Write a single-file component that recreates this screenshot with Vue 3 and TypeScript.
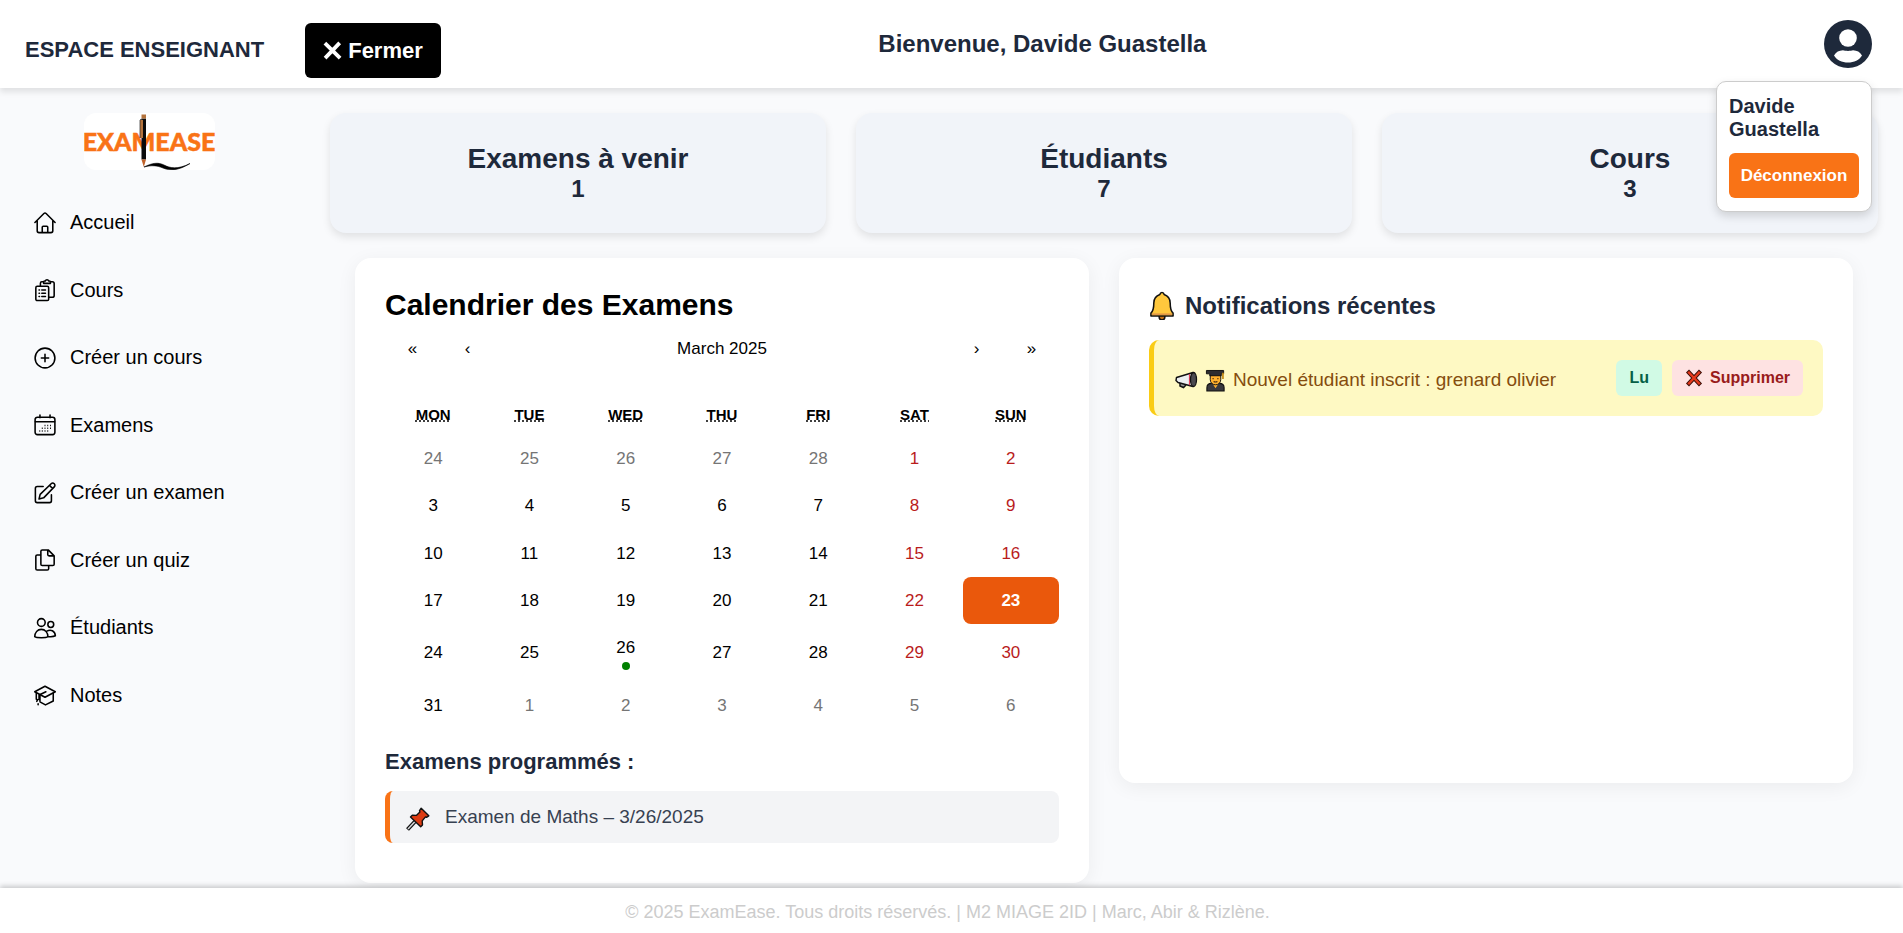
<script setup lang="ts">
interface Stat {
  label: string
  value: number
}

interface Day {
  day: number
  weekend: boolean
  outside: boolean
  today: boolean
  exam: boolean
}

const user = 'Davide Guastella'

const menu: { id: string; label: string }[] = [
  { id: 'home', label: 'Accueil' },
  { id: 'courses', label: 'Cours' },
  { id: 'add-course', label: 'Créer un cours' },
  { id: 'exams', label: 'Examens' },
  { id: 'add-exam', label: 'Créer un examen' },
  { id: 'quiz', label: 'Créer un quiz' },
  { id: 'students', label: 'Étudiants' },
  { id: 'grades', label: 'Notes' },
]

const stats: Stat[] = [
  { label: 'Examens à venir', value: 1 },
  { label: 'Étudiants', value: 7 },
  { label: 'Cours', value: 3 },
]

const weekdays: [string, string][] = [
  ['Mon', 'Monday'],
  ['Tue', 'Tuesday'],
  ['Wed', 'Wednesday'],
  ['Thu', 'Thursday'],
  ['Fri', 'Friday'],
  ['Sat', 'Saturday'],
  ['Sun', 'Sunday'],
]

const days: Day[] = Array.from({ length: 42 }, (_, i) => {
  const date = new Date(2025, 1, 24 + i)
  const outside = date.getMonth() !== 2
  const day = date.getDate()
  return {
    day,
    outside,
    weekend: !outside && i % 7 > 4,
    today: !outside && day === 23,
    exam: !outside && day === 26,
  }
})
</script>

<template>
  <div class="page">
    <header class="topbar">
      <div class="brand">
        <span class="space-name">ESPACE ENSEIGNANT</span>
        <button type="button" class="close">
          <svg width="19" height="19" viewBox="0 0 18 18" aria-hidden="true">
            <path d="M1.800 2 16.200 16.200M15.800 1.800 2 16.200" stroke="#fff" stroke-width="3.600" />
          </svg>
          Fermer
        </button>
      </div>
      <h1 class="welcome">Bienvenue, {{ user }}</h1>
      <div class="account">
        <button type="button" class="avatar" aria-label="Profil">
          <svg width="48" height="48" viewBox="0 0 48 48" aria-hidden="true">
            <circle cx="24" cy="24" r="24" fill="#1e293b" />
            <circle cx="24" cy="18" r="8.800" fill="#fff" />
            <path d="M10 35.500c2-3.500 5-5 9-5.200 2 .8 8 .8 10 0 4 .2 7 1.700 9 5.200-2.500 4.500-8 7-14 7s-11.500-2.500-14-7z" fill="#fff" />
          </svg>
        </button>
        <div class="dropdown">
          <p class="user-name">{{ user }}</p>
          <button type="button" class="logout">Déconnexion</button>
        </div>
      </div>
    </header>

    <div class="body">
      <aside class="sidebar">
        <svg class="logo" width="131" height="57" viewBox="0 0 131 57" role="img" aria-label="ExamEase">
          <text x="65" y="38" text-anchor="middle" class="logo-text">EXAMEASE</text>
          <path d="M57.500 5.500h4.500v41h-4.500z" fill="#0b0b0b" />
          <path d="M57.500 1.500h4.500v4h-4.500zM56 7h3v18h-3z" fill="#b4733c" />
          <path d="M56 6.500h3M56 7v18" stroke="#222" stroke-width=".7" fill="none" />
          <path d="M57.500 46.500h4.500l-2.200 7.500z" fill="#c0622a" />
          <path d="M60 54c8-4 14-5 20-2s13 5 26-1.500c-11 7-20 7.500-27 4.500-6-2.500-11-3-19-1z" fill="#000" stroke="#000" stroke-width=".6" />
        </svg>
        <nav class="menu">
          <a v-for="item in menu" :key="item.id" href="#" class="menu-link">
            <svg class="menu-icon" viewBox="0 0 24 24" aria-hidden="true">
              <g v-if="item.id === 'home'">
                <path d="M1 11.500 10.800 1.700a1.700 1.700 0 0 1 2.400 0L23 11.500M3.500 9.500v11a2 2 0 0 0 2 2h13a2 2 0 0 0 2-2v-11M9 22.500v-6a1 1 0 0 1 1-1h4a1 1 0 0 1 1 1v6" />
              </g>
              <g v-else-if="item.id === 'courses'">
                <rect x="2" y="8" width="14" height="15.500" rx="1.500" />
                <path d="M7 7.500V4.500a1.500 1.500 0 0 1 1.500-1.500H10M18.500 3H20a2 2 0 0 1 2 2v13a2 2 0 0 1-2 2h-3.500" />
                <path d="M10.500 4.800V3.200a1 1 0 0 1 1-1h.8a2 2 0 0 1 3.800 0h.8a1 1 0 0 1 1 1v1.600z" />
                <path d="M5.500 12h.5M8.500 12h4M5.500 15.500h.5M8.500 15.500h4M5.500 19h.5M8.500 19h4" />
              </g>
              <g v-else-if="item.id === 'add-course'">
                <circle cx="12" cy="12" r="10.800" />
                <path d="M12 8v8M8 12h8" />
              </g>
              <g v-else-if="item.id === 'exams'">
                <rect x="1.200" y="3.500" width="21.600" height="19" rx="2.500" />
                <path d="M1.500 8.500h21M6.500 1v3M17.500 1v3" />
                <path d="M11.500 12.500h1M14.500 12.500h1M17.500 12.500h1M8.500 15.500h1M11.500 15.500h1M14.500 15.500h1M17.500 15.500h1M5.800 18.500h1M8.500 18.500h1M11.500 18.500h1M14.500 18.500h1" stroke-linecap="butt" />
              </g>
              <g v-else-if="item.id === 'add-exam'">
                <path d="M10 5H3.500a2 2 0 0 0-2 2v13.500a2 2 0 0 0 2 2H17a2 2 0 0 0 2-2V14" />
                <path d="M5.500 18.500 6.700 13.500 18.700 1.900a2.400 2.400 0 0 1 3.400 3.400L10.500 17.300zM17 3.800l3.200 3.200" />
              </g>
              <g v-else-if="item.id === 'quiz'">
                <path d="M7 6.500H3.500a1.500 1.500 0 0 0-1.500 1.500v13.500A1.500 1.500 0 0 0 3.500 23h11a1.500 1.500 0 0 0 1.500-1.500V18.500" />
                <path d="M9 1h6.500L22 7.500V16.500a1.500 1.500 0 0 1-1.500 1.500H9a1.500 1.500 0 0 1-1.500-1.500v-14A1.500 1.500 0 0 1 9 1zM15 1.500V6a1.500 1.500 0 0 0 1.500 1.500H22" />
              </g>
              <g v-else-if="item.id === 'students'">
                <circle cx="8" cy="6" r="4.200" />
                <circle cx="18.300" cy="8.200" r="3.200" />
                <path d="M.8 21.500c.2-4.500 3-8 7.200-8s7 3.500 7.200 8c-2 1.500-12.400 1.500-14.400 0zM14 15.500c4-2.500 9-.5 9.300 5-1.500.8-4.800 1.200-8 .8" />
              </g>
              <g v-else>
                <path d="M.8 8.500 12 2.500l11.200 6L12 14.500z" />
                <path d="M21 10v8.500l-8.500 4.300L6.500 19.500M13 8.500 5.500 12v5M2.500 10v6.500M4 17l-1 2M6.500 12.500v6M4.500 21.500v1" />
              </g>
            </svg>
            {{ item.label }}
          </a>
        </nav>
      </aside>

      <main class="content">
        <section class="stats">
          <article v-for="stat in stats" :key="stat.label" class="stat">
            <h2>{{ stat.label }}</h2>
            <p>{{ stat.value }}</p>
          </article>
        </section>

        <div class="panels">
          <section class="panel">
            <h2 class="calendar-title">Calendrier des Examens</h2>
            <div class="calendar">
              <div class="calendar-nav">
                <button type="button" aria-label="Année précédente">«</button>
                <button type="button" aria-label="Mois précédent">‹</button>
                <button type="button" class="month">March 2025</button>
                <button type="button" aria-label="Mois suivant">›</button>
                <button type="button" aria-label="Année suivante">»</button>
              </div>
              <div class="weekdays">
                <div v-for="[short, full] in weekdays" :key="short">
                  <abbr :title="full">{{ short }}</abbr>
                </div>
              </div>
              <div class="days">
                <button
                  v-for="(d, i) in days"
                  :key="i"
                  type="button"
                  class="day"
                  :class="{ outside: d.outside, weekend: d.weekend, today: d.today, 'has-exam': d.exam }"
                >
                  {{ d.day }}
                  <span v-if="d.exam" class="dot"></span>
                </button>
              </div>
            </div>
            <h3 class="exams-title">Examens programmés :</h3>
            <ul class="exams">
              <li>
                <svg width="24" height="24" viewBox="0 0 24 24" aria-hidden="true">
                  <path d="M1.500 22.500 9 14.500" stroke="#111" stroke-width="4" />
                  <path d="M2 22 9 14.500" stroke="#d6d9dc" stroke-width="1.500" />
                  <path d="M15.200 1.200 22.800 8.800l-2.300 1.500-1-.4-3.300 4 .3 4-1.800 1.800L4.500 10l1.800-1.800 4 .2 3.600-3.400-.4-1.400z" fill="#dc3b12" stroke="#111" stroke-width="1.400" stroke-linejoin="round" />
                </svg>
                Examen de Maths – 3/26/2025
              </li>
            </ul>
          </section>

          <section class="panel notifications">
            <h2 class="notifications-title">
              <svg width="26" height="29" viewBox="0 0 27 30" aria-hidden="true">
                <path d="M10.500 25h6v2a3 3 0 0 1-6 0z" fill="#c77416" stroke="#111" stroke-width="1.500" />
                <path d="M13.500 1.500c1.300 0 2 .8 2.200 2 4 1.300 6.300 4.500 6.300 9 0 5 .7 8.500 3 10.500V26H2v-3c2.300-2 3-5.500 3-10.500 0-4.500 2.300-7.700 6.300-9 .2-1.200.9-2 2.200-2z" fill="#ffc83d" stroke="#111" stroke-width="1.600" stroke-linejoin="round" />
                <path d="M3 23.200h21V25H3z" fill="#e19747" />
              </svg>
              Notifications récentes
            </h2>
            <div class="notice">
              <p class="notice-text">
                <svg width="24" height="18" viewBox="0 0 24 18" aria-hidden="true">
                  <path d="M6 11.500v3.500l3.500 1.500L12 14" fill="#999" stroke="#111" stroke-width="1.500" />
                  <path d="M2.500 6.500 19 1.500v14L4 11.500 2 9.500z" fill="#eceff1" stroke="#111" stroke-width="1.500" stroke-linejoin="round" />
                  <path d="M15.500 3v11.200" stroke="#e0425c" stroke-width="1.200" />
                  <ellipse cx="19.500" cy="8.500" rx="3" ry="7" fill="#4a4a4f" stroke="#111" stroke-width="1.300" />
                </svg>
                <svg width="21" height="23" viewBox="0 0 22 24" aria-hidden="true">
                  <path d="M2 23v-3.500c0-3 2-4.500 5-4.500h8c3 0 5 1.500 5 4.500V23z" fill="#38383d" stroke="#111" stroke-width="1.200" />
                  <path d="M8 15.500h6l-3 4.500z" fill="#ffb02e" />
                  <path d="M5.500 6v5c0 3.500 2.500 5.500 5.500 5.500s5.500-2 5.500-5.500V6z" fill="#ffb02e" stroke="#111" stroke-width="1" />
                  <path d="M1.500 1.500h18V5H17v2H5V5H1.500z" fill="#2c2c30" stroke="#111" />
                  <path d="M18.800 4v6.500" stroke="#c58a12" stroke-width="1.800" />
                  <path d="M8.500 9.500v1.200M13.500 9.500v1.200M9 13q2 1.200 4 0" stroke="#402a10" stroke-width="1.200" fill="none" />
                </svg>
                <span>Nouvel étudiant inscrit : grenard olivier</span>
              </p>
              <button type="button" class="read">Lu</button>
              <button type="button" class="delete">
                <svg width="19" height="18" viewBox="0 0 19 18" aria-hidden="true">
                  <path d="M2.500 2 15.500 16M15.500 2 2.500 16" stroke="#3d0f08" stroke-width="4.200" />
                  <path d="M3.200 2.700 14.800 15.300M14.800 2.700 3.200 15.300" stroke="#e6391b" stroke-width="2.400" />
                </svg>
                Supprimer
              </button>
            </div>
          </section>
        </div>
      </main>
    </div>

    <footer class="footer">© 2025 ExamEase. Tous droits réservés. | M2 MIAGE 2ID | Marc, Abir &amp; Rizlène.</footer>
  </div>
</template>

<style>
body {
  margin: 0;
}
</style>

<style scoped>
.page {
  display: flex;
  flex-direction: column;
  min-height: 100vh;
  background: #f9fafc;
  color: #000;
  font-family: "Liberation Sans", Arial, sans-serif;
}

.page * {
  box-sizing: border-box;
}

h1,
h2,
h3,
p,
ul {
  margin: 0;
  padding: 0;
}

button {
  border: 0;
  padding: 0;
  background: none;
  color: inherit;
  font-family: inherit;
  cursor: pointer;
}

.topbar {
  position: relative;
  z-index: 2;
  display: flex;
  align-items: center;
  height: 88px;
  padding: 0 31px 0 25px;
  background: #fff;
  box-shadow: 0 4px 6px rgba(0, 0, 0, 0.1);
  color: #1e293b;
}

.brand {
  display: flex;
  align-items: center;
  gap: 41px;
  margin-top: 13px;
}

.space-name {
  padding-bottom: 2px;
  font-size: 22px;
  font-weight: 700;
}

.close {
  display: flex;
  align-items: center;
  gap: 6px;
  height: 55px;
  padding: 0 18px;
  border-radius: 6px;
  background: #000;
  color: #fff;
  font-size: 22px;
  font-weight: 700;
}

.welcome {
  flex: 1;
  font-size: 24px;
  text-align: center;
}

.account {
  position: relative;
  display: flex;
  justify-content: flex-end;
  width: 228px;
}

.avatar,
.avatar svg {
  display: block;
}

.avatar {
  border-radius: 50%;
}

.dropdown {
  position: absolute;
  top: 61px;
  right: 0;
  width: 156px;
  padding: 13px 12px;
  border: 1px solid #ccc;
  border-radius: 10px;
  background: #fff;
  box-shadow: 0 4px 10px rgba(0, 0, 0, 0.15);
}

.user-name {
  margin-bottom: 12px;
  font-size: 20px;
  font-weight: 700;
  line-height: 23px;
}

.logout {
  width: 100%;
  height: 45px;
  border-radius: 6px;
  background: #f97316;
  color: #fff;
  font-size: 17px;
  font-weight: 700;
}

.body {
  display: flex;
  flex: 1;
  padding: 25px 25px 5px 0;
}

.sidebar {
  flex: none;
  width: 299px;
  margin-right: 31px;
}

.logo {
  display: block;
  margin: 0 auto;
  border-radius: 12px;
  background: #fff;
}

.logo-text {
  fill: #f97316;
  stroke: #f97316;
  stroke-width: 0.5px;
  font-family: Lato, sans-serif;
  font-size: 25px;
  font-weight: 900;
}

.menu {
  display: grid;
  grid-auto-rows: 1fr;
  height: 540px;
  margin-top: 19px;
}

.menu-link {
  display: flex;
  align-items: center;
  gap: 14px;
  padding-left: 34px;
  color: #000;
  font-size: 20px;
  text-decoration: none;
}

.menu-icon {
  width: 22px;
  height: 22px;
  overflow: visible;
  fill: none;
  stroke: #000;
  stroke-width: 1.7;
  stroke-linecap: round;
  stroke-linejoin: round;
}

.content {
  flex: 1;
  min-width: 0;
}

.stats {
  display: grid;
  grid-template-columns: repeat(3, 1fr);
  gap: 30px;
}

.stat {
  padding: 30px;
  border-radius: 16px;
  background: #f1f4f9;
  box-shadow: 0 4px 8px rgba(0, 0, 0, 0.1);
  color: #1e293b;
  text-align: center;
}

.stat h2 {
  font-size: 28px;
  line-height: 32px;
}

.stat p {
  font-size: 24px;
  font-weight: 700;
  line-height: 28px;
}

.panels {
  display: grid;
  grid-template-columns: repeat(2, 1fr);
  align-items: start;
  gap: 30px;
  margin-top: 25px;
  padding: 0 25px;
}

.panel {
  padding: 30px;
  border-radius: 16px;
  background: #fff;
  box-shadow: 0 4px 20px rgba(0, 0, 0, 0.06);
}

.calendar-title {
  font-size: 30px;
  line-height: 34px;
}

.calendar-nav {
  display: flex;
  height: 54px;
}

.calendar-nav button {
  width: 55px;
  font-size: 17px;
}

.calendar-nav .month {
  flex: 1;
}

.weekdays,
.days {
  display: grid;
  grid-template-columns: repeat(7, 1fr);
}

.weekdays {
  padding: 30px 0 11px;
  font-size: 15px;
  font-weight: 700;
  line-height: 18px;
  text-align: center;
  text-transform: uppercase;
}

.days {
  min-height: 294px;
}

.day {
  padding: 14px 0;
  border-radius: 8px;
  font-size: 17px;
  line-height: 19px;
}

.day.has-exam {
  padding-bottom: 11px;
}

.weekend {
  color: #b91c1c;
}

.outside {
  color: #757575;
}

.today {
  background: #ea580c;
  color: #fff;
  font-weight: 700;
}

.dot {
  display: block;
  width: 8px;
  height: 8px;
  margin: 5px auto 0;
  border-radius: 50%;
  background: green;
}

.exams-title {
  margin: 20px 0 16px;
  color: #1e293b;
  font-size: 22px;
  line-height: 26px;
}

.exams {
  margin-bottom: 10px;
  list-style: none;
}

.exams li {
  display: flex;
  align-items: center;
  gap: 15px;
  height: 52px;
  padding: 0 16px;
  border-left: 5px solid #f97316;
  border-radius: 8px;
  background: #f3f4f6;
  color: #374151;
  font-size: 19px;
}

.exams svg {
  margin-top: 4px;
}

.notifications {
  min-height: 525px;
}

.notifications-title {
  display: flex;
  align-items: center;
  gap: 10px;
  margin-bottom: 17px;
  color: #1e293b;
  font-size: 24px;
  line-height: 35px;
}

.notice {
  display: flex;
  align-items: center;
  gap: 10px;
  height: 76px;
  padding: 0 20px;
  border-left: 5px solid #facc15;
  border-radius: 10px;
  background: #fef9c3;
}

.notice-text {
  display: flex;
  flex: 1;
  align-items: center;
  gap: 7px;
  padding-top: 4px;
  color: #854d0e;
  font-size: 19px;
}

.read,
.delete {
  display: flex;
  align-items: center;
  gap: 6px;
  height: 36px;
  padding: 0 13px;
  border-radius: 6px;
  font-size: 16px;
  font-weight: 700;
}

.read {
  background: #d1fae5;
  color: #065f46;
}

.delete {
  background: #fee2e2;
  color: #991b1b;
}

.footer {
  position: relative;
  padding: 2px 8px 0 0;
  background: #fff;
  box-shadow: 0 -2px 5px rgba(0, 0, 0, 0.2);
  color: #ccc;
  font-size: 18px;
  line-height: 44px;
  text-align: center;
}
</style>
